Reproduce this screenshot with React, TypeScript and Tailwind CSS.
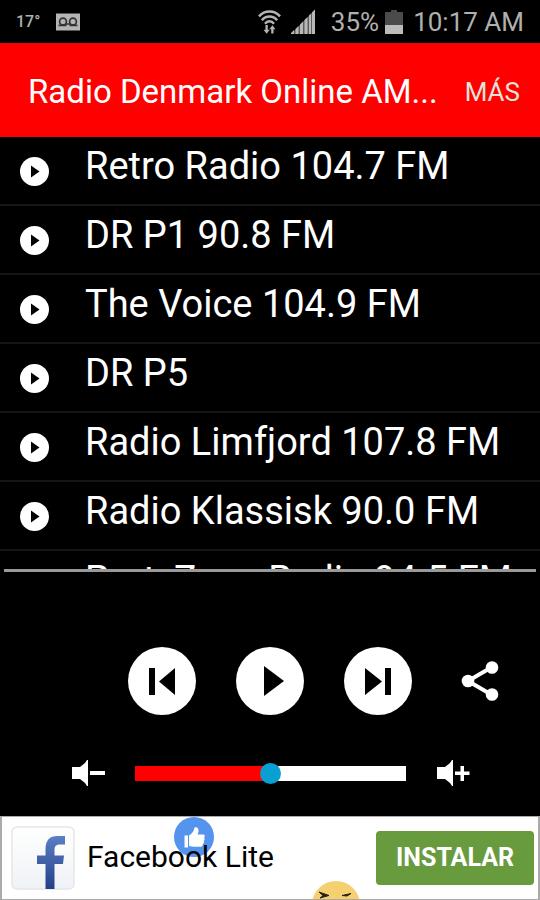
import { useState } from 'react';
import type { ReactNode } from 'react';

const STATIONS = [
  'Retro Radio 104.7 FM',
  'DR P1 90.8 FM',
  'The Voice 104.9 FM',
  'DR P5',
  'Radio Limfjord 107.8 FM',
  'Radio Klassisk 90.0 FM',
  'PartyZone Radio 94.5 FM',
];

function VoicemailIcon() {
  return (
    <svg className="h-[18px] w-6" viewBox="0 0 24 18" fill="none" aria-hidden="true">
      <rect width="24" height="17" y="0.5" fill="#b4b4b4" />
      <g stroke="#333" strokeWidth="1.7">
        <circle cx="7" cy="8.5" r="3.4" />
        <circle cx="17" cy="8.5" r="3.4" />
        <path d="M2.500 12.300h8M13.500 12.300h8M9.500 11h5" />
      </g>
    </svg>
  );
}

function WifiIcon() {
  return (
    <svg className="h-[26px] w-[23px]" viewBox="0 0 24 26" fill="none" stroke="#b4b4b4" aria-hidden="true">
      <g strokeWidth="2.6">
        <path d="M1 7.2C7 0.4 17 0.4 23 7.2" />
        <path d="M4 11.200C8.500 6 15.500 6 20 11.200" />
        <path d="M7.300 14.800C10 11.500 14 11.500 16.700 14.800" />
      </g>
      <path d="M9 16v5.500M15 19v6" strokeWidth="2.4" />
      <path d="M5.800 21h6.400L9 25.200zM11.800 20.500h6.400L15 16.300z" fill="#b4b4b4" stroke="none" />
    </svg>
  );
}

function SignalIcon() {
  return (
    <svg className="h-[26px] w-6" viewBox="0 0 24 26" aria-hidden="true">
      <path d="M0 25L24 0.500V25z" fill="#5c5c5c" />
      <path
        d="M0 25v-1l3-3v4zM4.500 25v-5l3-3v8zM9 25v-9.500l3-3V25zM13.500 25V11l3-3v17zM18 25V6.500l2-2V25zM21 25V3.500l3-3V25z"
        fill="#b8b8b8"
      />
    </svg>
  );
}

function BatteryIcon() {
  return (
    <svg className="h-6 w-[18px]" viewBox="0 0 18 24" aria-hidden="true">
      <path d="M6 0h6v2h6v13H0V2h6z" fill="#4b4b4b" />
      <path d="M0 15h18v9H0z" fill="#bcbcbc" />
    </svg>
  );
}

function StatusBar() {
  return (
    <div className="flex h-[43px] items-center px-4 text-[#b0b0b0]">
      <span className="text-base font-medium">17°</span>
      <span className="ml-4">
        <VoicemailIcon />
      </span>
      <div className="ml-auto flex items-center">
        <WifiIcon />
        <span className="ml-2.5">
          <SignalIcon />
        </span>
        <span className="ml-4 text-[26px] leading-8">35%</span>
        <span className="ml-1.5">
          <BatteryIcon />
        </span>
        <span className="ml-2.5 text-[26px] leading-8">10:17 AM</span>
      </div>
    </div>
  );
}

function StationRow({ name }: { name: string }) {
  return (
    <li className="h-[69px] border-b-2 border-[#151515]">
      <button type="button" className="flex h-full w-full items-start pl-5 text-left">
        <svg className="mt-5 h-[29px] w-[29px] shrink-0" viewBox="0 0 29 29" aria-hidden="true">
          <circle cx="14.5" cy="14.5" r="14.500" fill="#fff" />
          <path d="M11 8.500v12l8.500-6z" fill="#000" />
        </svg>
        <span className="ml-9 text-[38px] leading-[58px] whitespace-nowrap">{name}</span>
      </button>
    </li>
  );
}

function RoundButton({ label, onClick, children }: { label: string; onClick?: () => void; children: ReactNode }) {
  return (
    <button type="button" aria-label={label} onClick={onClick} className="h-[68px] w-[68px] rounded-full bg-white">
      <svg className="h-[68px] w-[68px]" viewBox="0 0 68 68" fill="#000" aria-hidden="true">
        {children}
      </svg>
    </button>
  );
}

function VolumeIcon({ plus }: { plus?: boolean }) {
  return (
    <svg className="h-7 w-[34px]" viewBox="0 0 34 28" fill="#fff" aria-hidden="true">
      <path d="M1 8h8l5-4 2-3h1v26h-1l-2-3-5-4H1z" />
      {plus ? <path d="M19 12.500h5.500V7H28v5.500h5.500V16H28v6h-3.500v-6H19z" /> : <path d="M19 12h15v4H19z" />}
    </svg>
  );
}

function Player() {
  const [volume, setVolume] = useState(50);
  const [playing, setPlaying] = useState(false);

  return (
    <section className="h-[244px] pt-[75px]">
      <div className="flex items-center justify-end gap-11 pr-9">
        <div className="flex gap-10">
          <RoundButton label="Anterior">
            <path d="M21 21h6v27h-6zM47 21v27L31 34.500z" />
          </RoundButton>
          <RoundButton label={playing ? 'Pausa' : 'Reproducir'} onClick={() => setPlaying(!playing)}>
            {playing ? <path d="M23 19h8v30h-8zM37 19h8v30h-8z" /> : <path d="M28 19v30l20-15z" />}
          </RoundButton>
          <RoundButton label="Siguiente">
            <path d="M21 21v27l17-13.500zM41 21h6v27h-6z" />
          </RoundButton>
        </div>
        <button type="button" aria-label="Compartir">
          <svg className="h-12 w-12" viewBox="0 0 48 48" fill="#fff" aria-hidden="true">
            <path d="M36 10L12 24l24 14" fill="none" stroke="#fff" strokeWidth="4" />
            <circle cx="36" cy="10.500" r="6.300" />
            <circle cx="12" cy="24" r="6.300" />
            <circle cx="36" cy="37.500" r="6.300" />
          </svg>
        </button>
      </div>
      <div className="mt-11 flex items-center gap-[30px] pr-[70px] pl-[71px]">
        <button type="button" aria-label="Bajar volumen" onClick={() => setVolume(Math.max(0, volume - 10))}>
          <VolumeIcon />
        </button>
        <input
          type="range"
          aria-label="Volumen"
          value={volume}
          onChange={(e) => setVolume(Number(e.target.value))}
          className="h-[15px] min-w-0 flex-1 appearance-none [&::-webkit-slider-thumb]:h-[21px] [&::-webkit-slider-thumb]:w-[21px] [&::-webkit-slider-thumb]:appearance-none [&::-webkit-slider-thumb]:rounded-full [&::-webkit-slider-thumb]:bg-[#089fd3]"
          style={{ background: `linear-gradient(to right, #ff0000 ${volume}%, #ffffff ${volume}%)` }}
        />
        <button type="button" aria-label="Subir volumen" onClick={() => setVolume(Math.min(100, volume + 10))}>
          <VolumeIcon plus />
        </button>
      </div>
    </section>
  );
}

function FacebookLogo() {
  return (
    <svg className="h-16 w-16 shrink-0" viewBox="0 0 64 64" aria-hidden="true">
      <defs>
        <linearGradient id="tile" x1="0" y1="0" x2="0" y2="1">
          <stop offset="0" stopColor="#ffffff" />
          <stop offset="1" stopColor="#eff2f6" />
        </linearGradient>
        <linearGradient id="letter" x1="0" y1="0" x2="0" y2="1">
          <stop offset="0" stopColor="#5b7fc4" />
          <stop offset="1" stopColor="#233f88" />
        </linearGradient>
      </defs>
      <rect x="1" y="1" width="62" height="62" rx="5" fill="url(#tile)" stroke="#e6e6e6" strokeWidth="1.500" />
      <path
        d="M34.500 63V38H26v-8.500h8.500V23c0-8.500 4-13 12-13H54v8.500h-4.500c-4.500 0-6 1.500-6 5.500v5.500H53L52 38h-8.500v25z"
        fill="url(#letter)"
      />
    </svg>
  );
}

function AdBanner() {
  return (
    <aside className="relative flex h-[84px] items-center overflow-hidden border-x-2 border-y border-[#aaa] bg-white pr-1 pl-[9px] text-black">
      <svg className="absolute top-0 left-[172px] h-10 w-10" viewBox="0 0 40 40" aria-hidden="true">
        <circle cx="20" cy="20" r="20" fill="#5493ee" />
        <path
          d="M10.500 18.500h3.500v12h-3.500zM15 18.500c3-1.500 5-4.500 5.500-8 2.500-1 4.500 1 4 4l-.8 3h5.300c2 0 2.300 2.500 1 3.300 1 1 .8 2.500-.3 3.200.7 1 .3 2.500-.9 3 .3 1.500-.5 2.800-2 2.800H19.500L15 29z"
          fill="#fff"
        />
      </svg>
      <svg className="absolute top-[63px] left-[310px] h-12 w-12" viewBox="0 0 48 48" aria-hidden="true">
        <circle cx="24" cy="25" r="24" fill="#f5d070" />
        <path d="M7 12l10 3.500-9 2.500 3-2.500z" fill="#2a2013" stroke="#2a2013" strokeWidth="1" />
        <path d="M30 15.500l9-2-4 2.500z" fill="#2a2013" stroke="#2a2013" strokeWidth="1" />
      </svg>
      <FacebookLogo />
      <span className="relative ml-3 pb-0.5 text-[30px] leading-9 whitespace-nowrap">Facebook Lite</span>
      <a
        href="#instalar"
        className="relative ml-auto flex h-[54px] w-[158px] items-center justify-center rounded bg-[#689a3e] text-[25px] font-bold text-white"
      >
        INSTALAR
      </a>
    </aside>
  );
}

export default function App() {
  return (
    <div className="flex h-screen flex-col overflow-hidden bg-black font-['Roboto','Liberation_Sans',sans-serif] text-white">
      <StatusBar />
      <header className="flex h-[94px] items-center justify-between bg-[#ff0000] pt-1 pr-5 pl-7">
        <h1 className="text-[33px] leading-10 whitespace-nowrap">Radio Denmark Online AM...</h1>
        <button type="button" className="text-[26px] text-[#e3e3dc]">
          MÁS
        </button>
      </header>
      <ul className="min-h-0 flex-1 overflow-hidden">
        {STATIONS.map((name) => (
          <StationRow key={name} name={name} />
        ))}
      </ul>
      <hr className="mx-1 border-t-3 border-[#999]" />
      <Player />
      <AdBanner />
    </div>
  );
}
